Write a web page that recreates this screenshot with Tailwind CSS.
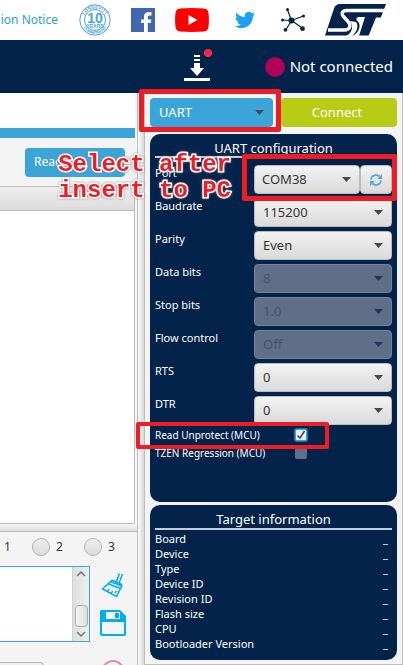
<!DOCTYPE html>
<html lang="en">
<head>
<meta charset="utf-8">
<meta name="viewport" content="width=device-width, initial-scale=1">
<title>Programmer</title>
<script src="https://cdn.jsdelivr.net/npm/@tailwindcss/browser@4"></script>
</head>
<body class="relative flex h-screen flex-col overflow-hidden bg-[#f4f4f4] font-['Noto_Sans','Open_Sans',sans-serif] text-[13px] text-white">

<header class="flex h-10 shrink-0 items-center justify-end bg-white pr-[17px]">
  <a href="#" class="mr-[21px] whitespace-nowrap text-xs text-[#2f9fd0]">ion Notice</a>
  <svg class="mr-5 size-8" viewBox="0 0 32 32" role="img" aria-label="10 years longevity commitment">
    <defs>
      <path id="arcTop" d="M4.500 16a11.500 11.500 0 0 1 23 0"/>
      <path id="arcBottom" d="M2 16a14 14 0 0 0 28 0"/>
    </defs>
    <g fill="none" stroke="#4ba6d6"><circle cx="16" cy="16" r="15.200" stroke-width="1"/><circle cx="16" cy="16" r="10.500" stroke-width="1"/></g>
    <g fill="#4ba6d6" font-family="Liberation Sans, sans-serif" font-weight="700" text-anchor="middle">
      <text font-size="4.500"><textPath href="#arcTop" startOffset="50%">LONGEVITY</textPath></text>
      <text font-size="4"><textPath href="#arcBottom" startOffset="50%">COMMITMENT</textPath></text>
      <text x="16" y="18.500" font-size="14">10</text>
      <text x="16" y="23.500" font-size="5">YEARS</text>
    </g>
  </svg>
  <svg class="mr-5 size-6" viewBox="0 0 24 24" role="img" aria-label="Facebook"><path fill="#4267b2" d="M0 0h24v24H0z"/><path fill="#fff" d="M13 24v-9h-3v-3.600h3V8.700C13 5.500 15 4 17.800 4c1.300 0 2.400.1 2.700.2v3.200h-1.900c-1.500 0-1.800.8-1.800 1.800v2.200h3.500l-.5 3.600h-3v9z"/></svg>
  <svg class="mr-[26px] h-6 w-[34px]" viewBox="0 0 34 24" role="img" aria-label="YouTube"><path fill="#f00" d="M5 .5Q17-.4 29 .5q4 .3 4.500 4.500.8 7 0 14-.5 4.200-4.500 4.500-12 .9-24 0Q1 23.200.5 19q-.8-7 0-14Q1 .8 5 .5z"/><path fill="#fff" d="M13.500 7v10l9-5z"/></svg>
  <svg class="mr-[26px] size-5" viewBox="0 0 24 24" role="img" aria-label="Twitter"><path fill="#1da1f2" d="M23.950 4.570a10 10 0 0 1-2.820.77 4.960 4.960 0 0 0 2.160-2.720c-.95.550-2 .95-3.130 1.180a4.920 4.920 0 0 0-8.380 4.480C7.690 8.090 4.070 6.130 1.640 3.160a4.820 4.820 0 0 0-.67 2.480c0 1.710.87 3.210 2.190 4.100a4.900 4.900 0 0 1-2.230-.62v.060a4.920 4.920 0 0 0 3.950 4.830 5 5 0 0 1-2.210.080 4.940 4.940 0 0 0 4.600 3.420A9.870 9.870 0 0 1 0 19.540a13.990 13.990 0 0 0 7.550 2.210c9.050 0 14-7.500 14-13.980 0-.21 0-.42-.020-.63a9.940 9.940 0 0 0 2.460-2.550z"/></svg>
  <svg class="mr-5 size-6" viewBox="0 0 24 24" role="img" aria-label="Community" fill="#03234b" stroke="#03234b"><path stroke-width="1.200" d="M10.500 12.500 6.500 2M10.500 12.500 22.500 8M10.500 12.500 1.500 12M10.500 12.500 5 21.500M10.500 12.500 22 20.500"/><g stroke="none"><circle cx="10.500" cy="12.500" r="3"/><circle cx="6.500" cy="1.500" r="1.500"/><circle cx="22.500" cy="8" r="1.500"/><circle cx="1.500" cy="12" r="1.500"/><circle cx="4.500" cy="21.800" r="1.900"/><circle cx="21.500" cy="20.700" r="2.400"/></g></svg>
  <svg class="h-8 w-[61px]" viewBox="0 0 61 32" role="img" aria-label="ST">
    <path fill="#03234b" d="M0 31.500 9 4.500Q10.500 0 15 0H61L49 31.500z"/>
    <path fill="none" stroke="#fff" stroke-width="3.400" d="M62 6.500H22c-5 0-6 3.500-3.500 6l4.500 5c4 4.500 1 8.500-3.500 8.500H3"/>
    <path fill="#fff" d="M21 32c6-2.500 8-10 4-15l6 1c3 4 1 10-4 14z"/>
    <path fill="#fff" d="M40 13h-5c-4 0-4.500 2-2.500 4 4 4 2 11-4.500 15h6z"/>
    <path fill="#fff" d="m56.500 13.500-5.500 0L43.500 32H61V6z"/>
  </svg>
</header>

<div class="flex h-[53px] shrink-0 items-center justify-end gap-[53px] bg-[#03234b] pr-[10px]">
  <button type="button" aria-label="Updates" class="pb-1">
    <svg class="block h-8 w-7" viewBox="0 0 28 32" fill="#fff"><path d="M10 6h6v2h-6zM10 10h6v2h-6zM10 14h6v5h4l-7 8-7-8h4zM0 32h26v-3H0z"/><circle cx="24" cy="4" r="4" fill="#ff2549"/></svg>
  </button>
  <div class="flex items-center gap-[5px] text-[15px] whitespace-nowrap"><span class="size-5 rounded-full bg-[#b0005a]"></span>Not connected</div>
</div>

<main class="flex min-h-0 grow">
  <section class="flex min-w-0 grow flex-col">
    <div class="mr-0.5 h-[35px] shrink-0 bg-white"></div>
    <div class="mr-0.5 h-2.5 shrink-0 bg-[#3ba5da]"></div>
    <div class="mr-0.5 flex h-12 shrink-0 items-center justify-end pr-2.5">
      <button type="button" class="h-[29px] w-[100px] rounded bg-[#3ba5da] px-[9px] text-left text-xs">Read</button>
    </div>
    <div class="mr-0.5 flex h-[338px] shrink-0 flex-col border-r border-b border-[#bdbdbd] bg-white">
      <div class="h-[25px] border-y border-[#bdbdbd] bg-linear-to-b from-[#efefef] to-[#dcdcdc]"></div>
    </div>
    <div class="h-2 shrink-0 border-b border-[#c0c0c0] bg-linear-to-b from-[#f8f8f8] to-[#dedede]"></div>
    <div class="mb-1 flex h-[30px] shrink-0 items-center pl-1 text-xs text-[#333]">
      <label for="r1" class="w-7">1</label>
      <input id="r1" name="level" type="radio" class="mr-[6px] size-[18px] appearance-none rounded-full border border-[#b5b5b5] bg-linear-to-b from-[#efefef] to-[#dadada]">
      <label for="r2" class="w-7">2</label>
      <input id="r2" name="level" type="radio" class="mr-[6px] size-[18px] appearance-none rounded-full border border-[#b5b5b5] bg-linear-to-b from-[#efefef] to-[#dadada]">
      <label for="r3">3</label>
    </div>
    <div class="flex h-[76px] shrink-0 gap-2.5 pr-[11px]">
      <div class="flex grow border-y border-r border-[#3ba5da] bg-white">
        <textarea aria-label="Log" readonly class="w-0 grow resize-none"></textarea>
        <div class="flex w-[17px] flex-col items-center justify-between border-l border-[#d0d0d0] bg-linear-to-r from-[#dedede] to-[#efefef] py-[3px]">
          <svg class="h-2 w-2.5" viewBox="0 0 10 8" fill="none" stroke="#777" stroke-width="1.500"><path d="M1 6l4-4 4 4"/></svg>
          <span class="mt-6 h-[22px] w-[13px] rounded-sm border border-[#aaa] bg-linear-to-r from-[#f5f5f5] to-[#dedede]"></span>
          <svg class="h-2 w-2.5" viewBox="0 0 10 8" fill="none" stroke="#777" stroke-width="1.500"><path d="M1 2l4 4 4-4"/></svg>
        </div>
      </div>
      <div class="flex flex-col justify-between pt-1.5 pb-1.5">
        <button type="button" aria-label="Clear log"><svg class="block size-[26px]" viewBox="0 0 26 26" fill="none" stroke="#00aeef" stroke-width="1.500"><path d="M15.500 11.500 19.500 1.500M18.500 12.500 22.500 2M10 9.500l12 4.500M10.500 9.500c1.500-1.500 3-1 4-.5l5.500 2.500c2 1 2.500 2 1 4l-4.500 9L2.500 17zM8.500 12l12 4.500M7 20l2-3M11 22l1.500-3M15 21l1.500-2"/></svg></button>
        <button type="button" aria-label="Save log"><svg class="block size-[26px]" viewBox="0 0 26 26"><path fill="#00aeef" d="M1 0h19l6 6v18q0 2-2 2H2q-2 0-2-2V1z"/><path fill="#f4f4f4" d="M6 2h14v7H6zM2 12h22v12H2z"/><path fill="#00aeef" d="M15 3h4v5h-4z"/></svg></button>
      </div>
    </div>
    <div class="mt-5 flex shrink-0 justify-between pr-3">
      <button type="button" aria-label="Log options" class="h-6 w-11 rounded-tr border border-l-0 border-[#b5b5b5] bg-[#ececec]"></button>
      <span class="-mt-0.5 size-6 rounded-full border-2 border-[#db8fb8]"></span>
    </div>
  </section>

  <div class="w-[7px] shrink-0 border-l border-[#bdbdbd] bg-linear-to-r from-[#fafafa] to-[#d8d8d8]"></div>

  <aside class="flex w-[259px] shrink-0 flex-col gap-[3px] border-x border-b border-[#bdbdbd] bg-[#f4f4f4] px-[5px] pt-[5px] pb-1">
    <div class="mb-1 flex h-[29px] gap-2">
      <div class="grid w-[123px] items-center">
        <select aria-label="Interface" class="col-start-1 row-start-1 h-[29px] appearance-none rounded bg-[#3ba5da] pl-[9px]"><option>UART</option></select>
        <svg class="pointer-events-none col-start-1 row-start-1 mr-[9px] h-[5px] w-[9px] justify-self-end" viewBox="0 0 9 5"><path fill="#4a4a4a" d="M0 0h9L4.500 5z"/></svg>
      </div>
      <button type="button" class="grow rounded bg-[#b8cc15] pr-1">Connect</button>
    </div>

    <section class="flex h-[368px] flex-col rounded-[10px] bg-[#03234b] px-[5px] pt-1">
      <h2 class="h-5 border-b-2 border-[#c8ccd2] text-center leading-5">UART configuration</h2>
      <div class="mt-[7px] flex flex-col gap-1">
        <div class="flex h-[29px]">
          <label for="port" class="w-[99px] text-[11px] leading-4">Port</label>
          <div class="grid w-[106px] items-center">
            <select id="port" class="col-start-1 row-start-1 h-[29px] appearance-none rounded-sm border border-[#bbb] bg-linear-to-b from-[#f2f2f2] to-[#dadada] pl-[7px] text-[#333]"><option>COM38</option></select>
            <svg class="pointer-events-none col-start-1 row-start-1 mr-[9px] h-[5px] w-[9px] justify-self-end" viewBox="0 0 9 5"><path fill="#4a4a4a" d="M0 0h9L4.500 5z"/></svg>
          </div>
          <button type="button" aria-label="Refresh ports" class="grid grow place-items-center rounded-sm border border-[#bbb] bg-linear-to-b from-[#f2f2f2] to-[#dadada]"><svg class="size-3" viewBox="0 0 12 12" fill="none" stroke="#5aa9d4" stroke-width="1.800"><path d="M1 5.500A5 5 0 0 1 9.500 2.500M11 6.500A5 5 0 0 1 2.500 9.500"/><path fill="#5aa9d4" stroke="none" d="M12 0v5H7zM0 12V7h5z"/></svg></button>
        </div>
        <div class="flex h-[29px]">
          <label for="baud" class="w-[99px] text-[11px] leading-4">Baudrate</label>
          <div class="grid grow items-center">
            <select id="baud" class="col-start-1 row-start-1 h-[29px] appearance-none rounded-sm border border-[#bbb] bg-linear-to-b from-[#f2f2f2] to-[#dadada] pl-2 text-[#333]"><option>115200</option></select>
            <svg class="pointer-events-none col-start-1 row-start-1 mr-[9px] h-[5px] w-[9px] justify-self-end" viewBox="0 0 9 5"><path fill="#4a4a4a" d="M0 0h9L4.500 5z"/></svg>
          </div>
        </div>
        <div class="flex h-[29px]">
          <label for="parity" class="w-[99px] text-[11px] leading-4">Parity</label>
          <div class="grid grow items-center">
            <select id="parity" class="col-start-1 row-start-1 h-[29px] appearance-none rounded-sm border border-[#bbb] bg-linear-to-b from-[#f2f2f2] to-[#dadada] pl-2 text-[#333]"><option>Even</option></select>
            <svg class="pointer-events-none col-start-1 row-start-1 mr-[9px] h-[5px] w-[9px] justify-self-end" viewBox="0 0 9 5"><path fill="#4a4a4a" d="M0 0h9L4.500 5z"/></svg>
          </div>
        </div>
        <div class="flex h-[29px]">
          <label for="databits" class="w-[99px] text-[11px] leading-4">Data bits</label>
          <div class="grid grow items-center">
            <select id="databits" disabled class="col-start-1 row-start-1 h-[29px] appearance-none rounded-sm border border-[#74829a] bg-[#5f6f88] pl-2 text-[#43536e] opacity-100"><option>8</option></select>
            <svg class="pointer-events-none col-start-1 row-start-1 mr-[9px] h-[5px] w-[9px] justify-self-end" viewBox="0 0 9 5"><path fill="#24375a" d="M0 0h9L4.500 5z"/></svg>
          </div>
        </div>
        <div class="flex h-[29px]">
          <label for="stopbits" class="w-[99px] text-[11px] leading-4">Stop bits</label>
          <div class="grid grow items-center">
            <select id="stopbits" disabled class="col-start-1 row-start-1 h-[29px] appearance-none rounded-sm border border-[#74829a] bg-[#5f6f88] pl-2 text-[#43536e] opacity-100"><option>1.0</option></select>
            <svg class="pointer-events-none col-start-1 row-start-1 mr-[9px] h-[5px] w-[9px] justify-self-end" viewBox="0 0 9 5"><path fill="#24375a" d="M0 0h9L4.500 5z"/></svg>
          </div>
        </div>
        <div class="flex h-[29px]">
          <label for="flow" class="w-[99px] text-[11px] leading-4">Flow control</label>
          <div class="grid grow items-center">
            <select id="flow" disabled class="col-start-1 row-start-1 h-[29px] appearance-none rounded-sm border border-[#74829a] bg-[#5f6f88] pl-2 text-[#43536e] opacity-100"><option>Off</option></select>
            <svg class="pointer-events-none col-start-1 row-start-1 mr-[9px] h-[5px] w-[9px] justify-self-end" viewBox="0 0 9 5"><path fill="#24375a" d="M0 0h9L4.500 5z"/></svg>
          </div>
        </div>
        <div class="flex h-[29px]">
          <label for="rts" class="w-[99px] text-[11px] leading-4">RTS</label>
          <div class="grid grow items-center">
            <select id="rts" class="col-start-1 row-start-1 h-[29px] appearance-none rounded-sm border border-[#bbb] bg-linear-to-b from-[#f2f2f2] to-[#dadada] pl-2 text-[#333]"><option>0</option></select>
            <svg class="pointer-events-none col-start-1 row-start-1 mr-[9px] h-[5px] w-[9px] justify-self-end" viewBox="0 0 9 5"><path fill="#4a4a4a" d="M0 0h9L4.500 5z"/></svg>
          </div>
        </div>
        <div class="flex h-[29px]">
          <label for="dtr" class="w-[99px] text-[11px] leading-4">DTR</label>
          <div class="grid grow items-center">
            <select id="dtr" class="col-start-1 row-start-1 h-[29px] appearance-none rounded-sm border border-[#bbb] bg-linear-to-b from-[#f2f2f2] to-[#dadada] pl-2 text-[#333]"><option>0</option></select>
            <svg class="pointer-events-none col-start-1 row-start-1 mr-[9px] h-[5px] w-[9px] justify-self-end" viewBox="0 0 9 5"><path fill="#4a4a4a" d="M0 0h9L4.500 5z"/></svg>
          </div>
        </div>
      </div>
      <div class="mt-px flex h-[18px] items-center text-[10px]">
        <label for="unprotect" class="w-[140px]">Read Unprotect (MCU)</label>
        <span class="grid place-items-center">
          <input id="unprotect" type="checkbox" checked class="col-start-1 row-start-1 size-3 appearance-none rounded-xs border border-[#2fa8e0] bg-[#eee] ring-1 ring-[#2fa8e0]/60">
          <svg class="pointer-events-none col-start-1 row-start-1 size-3" viewBox="0 0 12 12" fill="none" stroke="#444" stroke-width="1.500"><path d="M2.500 6.500 5 9l4.500-7"/></svg>
        </span>
      </div>
      <div class="flex h-[18px] items-center text-[10px]">
        <label for="tzen" class="w-[140px]">TZEN Regression (MCU)</label>
        <input id="tzen" type="checkbox" disabled class="size-3 appearance-none rounded-xs bg-[#5f6f88]">
      </div>
    </section>

    <section class="flex h-[155px] flex-col rounded-[10px] bg-[#03234b] px-[5px] pt-1">
      <h2 class="h-[21px] border-b-2 border-[#c8ccd2] text-center leading-5">Target information</h2>
      <dl class="mt-px grid grid-cols-[1fr_auto] pr-1 text-[11px] leading-[15px]">
        <dt>Board</dt><dd>_</dd>
        <dt>Device</dt><dd>_</dd>
        <dt>Type</dt><dd>_</dd>
        <dt>Device ID</dt><dd>_</dd>
        <dt>Revision ID</dt><dd>_</dd>
        <dt>Flash size</dt><dd>_</dd>
        <dt>CPU</dt><dd>_</dd>
        <dt>Bootloader Version</dt><dd>_</dd>
      </dl>
    </section>
  </aside>
</main>

<div class="pointer-events-none absolute top-[89px] right-[122px] h-[43px] w-[142px] rounded-xs border-5 border-[#ee1c24]"></div>
<div class="pointer-events-none absolute top-[154px] right-[6px] h-[47px] w-[155px] rounded-xs border-5 border-[#ee1c24]"></div>
<div class="pointer-events-none absolute top-[422px] right-[74px] h-[27px] w-[193px] rounded-xs border-4 border-[#ee1c24]"></div>
<p class="pointer-events-none absolute top-[152px] right-[172px] font-['Liberation_Mono',monospace] text-2xl leading-[26px] font-bold whitespace-nowrap text-[#ee1c24] [-webkit-text-stroke:3px_white] [paint-order:stroke_fill] drop-shadow-[0_0_1px_#888]">Select after<br>insert to PC</p>
</body>
</html>
